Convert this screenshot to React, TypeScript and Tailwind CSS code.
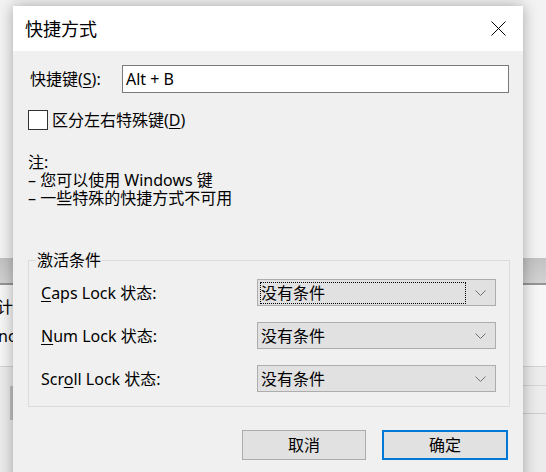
import React from "react";

// Shortcut-key dialog (Windows 10 style) sitting over another window.

function CloseIcon() {
  return (
    <svg width="15" height="15" viewBox="0 0 15 15" fill="none" stroke="#000" strokeWidth="1">
      <path d="M0.5 0.5 L14.5 14.5 M14.5 0.5 L0.5 14.5" />
    </svg>
  );
}

function Chevron() {
  return (
    <svg width="11" height="6" viewBox="0 0 11 6" fill="none" stroke="#707070" strokeWidth="1">
      <path d="M0.5 0.5 L5.5 5.5 L10.5 0.5" />
    </svg>
  );
}

interface ComboRowProps {
  label: React.ReactNode;
  value: string;
  focused?: boolean;
}

function ComboRow({ label, value, focused }: ComboRowProps) {
  return (
    <div className="flex items-center justify-between h-[27px]">
      <span className="pl-[12px] text-[16px] leading-[18px]">{label}</span>
      <div className="flex items-center w-[239px] h-[27px] border border-[#adadad] bg-[#e1e1e1]">
        <div
          className={
            focused
              ? "flex-1 flex items-center h-[22px] ml-[2px] border border-dotted border-black"
              : "flex-1 flex items-center h-[22px] ml-[2px] border border-transparent"
          }
        >
          <span className="text-[16px] leading-[18px]">{value}</span>
        </div>
        <div className="w-[29px] flex justify-start pl-[9px]">
          <Chevron />
        </div>
      </div>
    </div>
  );
}

export default function App() {
  return (
    <div className="relative w-[546px] h-[472px] overflow-hidden bg-[#f3f3f3] text-black font-['Noto_Sans','Noto_Sans_CJK_SC',sans-serif]">
      {/* window behind the dialog */}
      <div className="absolute left-0 top-[258px] w-full h-[25px] bg-gradient-to-b from-[#c2c2c2] to-[#d2d2d2]" />
      <div className="absolute left-0 top-[283px] w-full h-[2px] bg-[#959595]" />
      <div className="absolute left-0 top-[285px] w-full h-[81px] bg-[#f6f6f6]" />
      <div className="absolute left-0 top-[366px] w-full h-px bg-[#d3d3d3]" />
      <div className="absolute left-0 top-[367px] w-full h-[105px] bg-[#ececec]" />
      <div className="absolute left-[523px] top-[385px] w-[23px] h-px bg-[#d6d6d6]" />
      <div className="absolute left-[523px] top-[413px] w-[23px] h-px bg-[#cdcdcd]" />
      <div className="absolute left-[10px] top-[386px] w-[4px] h-[34px] bg-[#c2c2c2]" />
      <span className="absolute left-[-3px] top-[297px] text-[16px] leading-[20px]">计</span>
      <span className="absolute left-[-2px] top-[326px] text-[16px] leading-[20px]">nc</span>

      {/* dialog */}
      <div className="absolute left-[13px] top-[6px] w-[510px] h-[480px] flex flex-col bg-[#f0f0f0] shadow-[0_0_14px_rgba(0,0,0,0.32)]">
        <div className="h-[45px] shrink-0 flex items-center justify-between bg-white pl-[12px] pr-[17px]">
          <span className="text-[18px] leading-[22px]">快捷方式</span>
          <CloseIcon />
        </div>

        <div className="flex flex-col pl-[15px] pr-[13px] text-[16px] leading-[18px]">
          <div className="flex items-center mt-[14px] h-[28px]">
            <span className="w-[94px] pl-[2px]">
              快捷键(<u className="underline-offset-2">S</u>):
            </span>
            <div className="flex-1 mr-[1px] h-[28px] flex items-center border border-[#7a7a7a] bg-white pl-[3px]">
              Alt + B
            </div>
          </div>

          <div className="flex items-center gap-[4px] mt-[17px] h-[20px]">
            <div className="w-[20px] h-[20px] border border-[#333333] bg-white" />
            <span>
              区分左右特殊键(<u className="underline-offset-2">D</u>)
            </span>
          </div>

          <div className="mt-[23px] flex flex-col">
            <span>注:</span>
            <span>– 您可以使用 Windows 键</span>
            <span>– 一些特殊的快捷方式不可用</span>
          </div>

          <div className="relative mt-[53px] h-[147px] border border-[#dcdcdc] pt-[18px] pr-[13px] flex flex-col gap-[16px]">
            <span className="absolute left-[7px] top-[-10px] px-[1px] bg-[#f0f0f0]">激活条件</span>
            <ComboRow
              label={
                <>
                  <u className="underline-offset-2">C</u>aps Lock 状态:
                </>
              }
              value="没有条件"
              focused
            />
            <ComboRow
              label={
                <>
                  <u className="underline-offset-2">N</u>um Lock 状态:
                </>
              }
              value="没有条件"
            />
            <ComboRow
              label={
                <>
                  Scr<u className="underline-offset-2">o</u>ll Lock 状态:
                </>
              }
              value="没有条件"
            />
          </div>

          <div className="flex justify-end gap-[16px] mt-[23px] mr-[2px]">
            <button className="w-[124px] h-[30px] border border-[#adadad] bg-[#e1e1e1] text-[16px]">取消</button>
            <button className="w-[126px] h-[30px] border-2 border-[#0078d7] bg-[#e1e1e1] text-[16px]">确定</button>
          </div>
        </div>
      </div>
    </div>
  );
}
